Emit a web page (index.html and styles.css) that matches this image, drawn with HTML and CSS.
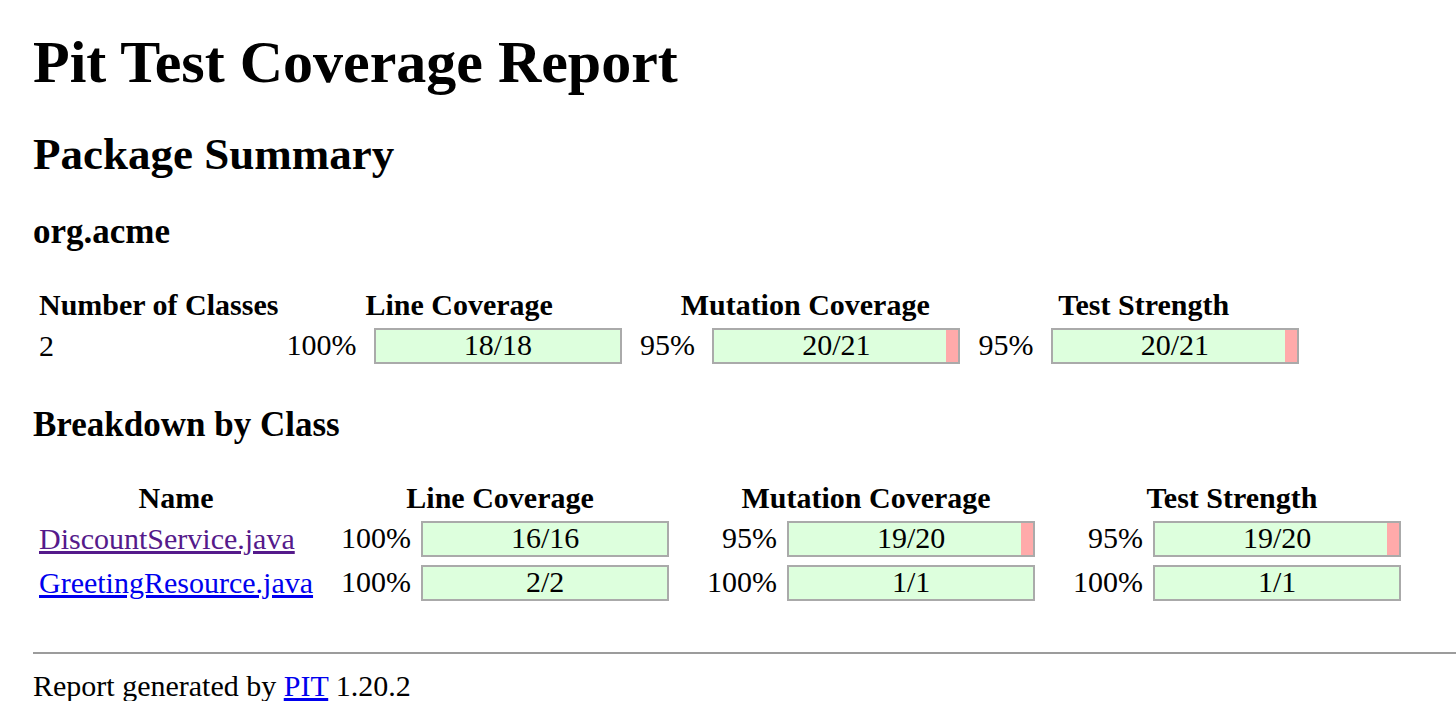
FILE: index.html
```html
<!DOCTYPE html>
<html lang="en">
<head>
<meta charset="utf-8">
<title>Pit Test Coverage Report</title>
<link rel="stylesheet" href="styles.css">
</head>
<body>
<h1>Pit Test Coverage Report</h1>
<h2>Package Summary</h2>
<h3>org.acme</h3>
<table class="report">
  <thead>
    <tr>
      <th>Number of Classes</th>
      <th>Line Coverage</th>
      <th>Mutation Coverage</th>
      <th>Test Strength</th>
    </tr>
  </thead>
  <tbody>
    <tr>
      <td>2</td>
      <td>100% <div class="coverage_bar"><div class="coverage_complete width-100"></div><div class="coverage_legend">18/18</div></div></td>
      <td>95% <div class="coverage_bar"><div class="coverage_complete width-95"></div><div class="coverage_legend">20/21</div></div></td>
      <td>95% <div class="coverage_bar"><div class="coverage_complete width-95"></div><div class="coverage_legend">20/21</div></div></td>
    </tr>
  </tbody>
</table>
<h3>Breakdown by Class</h3>
<table class="report">
  <thead>
    <tr>
      <th>Name</th>
      <th>Line Coverage</th>
      <th>Mutation Coverage</th>
      <th>Test Strength</th>
    </tr>
  </thead>
  <tbody>
    <tr>
      <td><a class="link visited" href="#DiscountService">DiscountService.java</a></td>
      <td><div class="coverage_percentage">100% </div><div class="coverage_bar"><div class="coverage_complete width-100"></div><div class="coverage_legend">16/16</div></div></td>
      <td><div class="coverage_percentage">95% </div><div class="coverage_bar"><div class="coverage_complete width-95"></div><div class="coverage_legend">19/20</div></div></td>
      <td><div class="coverage_percentage">95% </div><div class="coverage_bar"><div class="coverage_complete width-95"></div><div class="coverage_legend">19/20</div></div></td>
    </tr>
    <tr>
      <td><a class="link" href="#GreetingResource">GreetingResource.java</a></td>
      <td><div class="coverage_percentage">100% </div><div class="coverage_bar"><div class="coverage_complete width-100"></div><div class="coverage_legend">2/2</div></div></td>
      <td><div class="coverage_percentage">100% </div><div class="coverage_bar"><div class="coverage_complete width-100"></div><div class="coverage_legend">1/1</div></div></td>
      <td><div class="coverage_percentage">100% </div><div class="coverage_bar"><div class="coverage_complete width-100"></div><div class="coverage_legend">1/1</div></div></td>
    </tr>
  </tbody>
</table>
<hr class="rule">
<p class="footer">Report generated by <a class="link" href="#pitest">PIT</a> 1.20.2</p>
</body>
</html>
```

FILE: styles.css
```css
html {
  background: #ffffff;
}

body {
  margin: 0 0 0 33px;
  font-family: "Liberation Serif", "Times New Roman", serif;
  font-size: 30px;
  line-height: 1;
  color: #000000;
  background: #ffffff;
}

h1 {
  font-size: 60px;
  font-weight: bold;
  margin: 32px 0 40px;
}

h2 {
  font-size: 45px;
  font-weight: bold;
  margin: 37px 0;
}

h3 {
  font-size: 35px;
  font-weight: bold;
  margin: 37px 0 35px;
}

.report {
  border-collapse: separate;
  border-spacing: 4px;
  margin: 0;
  font-size: 30px;
  line-height: 1;
}

.report th,
.report td {
  padding: 2px;
  white-space: nowrap;
}

.report th {
  font-weight: bold;
  text-align: center;
}

.report td {
  text-align: left;
}

.link {
  color: #0000ee;
  text-decoration: underline;
}

.link.visited {
  color: #551a8b;
}

.coverage_percentage {
  display: inline-block;
  width: 90px;
  text-align: right;
}

.coverage_bar {
  display: inline-block;
  position: relative;
  width: 244px;
  height: 32px;
  margin: 0 10px;
  border: 2px solid #aaaaaa;
  background: #ffaaaa;
  vertical-align: -9px;
  text-align: left;
}

.coverage_complete {
  float: left;
  height: 100%;
  background: #ddffdd;
}

.width-100 {
  width: 100%;
}

.width-95 {
  width: 95%;
}

.coverage_legend {
  position: absolute;
  left: 0;
  top: 0;
  width: 100%;
  height: 100%;
  text-align: center;
  line-height: 30px;
}

.rule {
  height: 0;
  margin: 45px 0 0;
  border: 0;
  border-top: 2px solid #9c9c9c;
}

.footer {
  margin: 17px 0 0;
}
```
